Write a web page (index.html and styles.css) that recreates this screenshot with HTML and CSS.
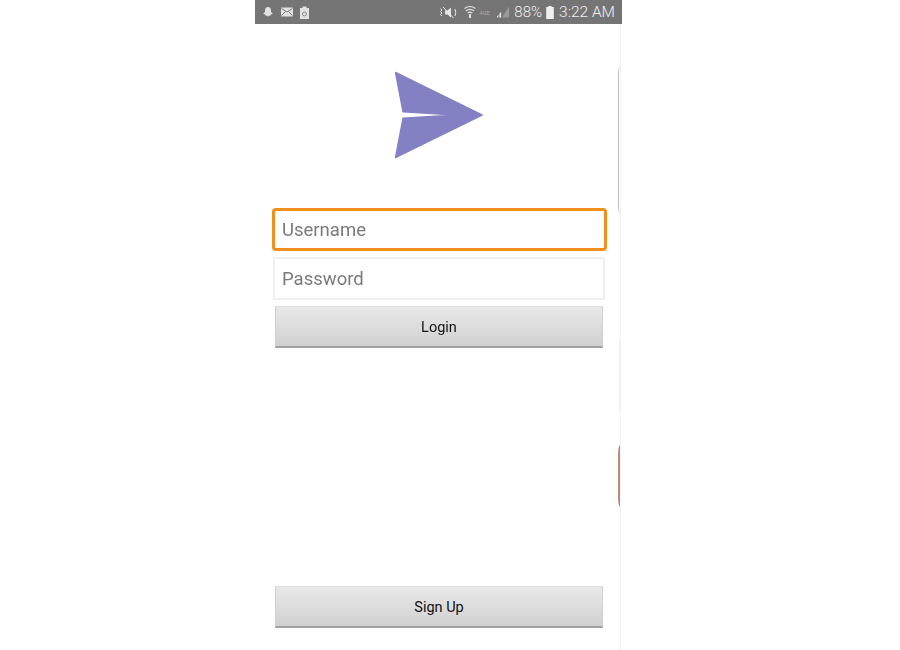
FILE: index.html
```html
<!DOCTYPE html>
<html>
<head>
    <title>Login</title>
    <meta http-equiv="Content-Type" content="text/html;charset=utf-8">
    <link rel="stylesheet" href="styles.css">
</head>
<body>
<div class="phone">
    <div class="status">
        <div class="status-left">
            <svg class="ico" width="12" height="12" viewBox="0 0 12 12"><path fill="#e2e2e2" d="M6 1C4 1 3 2.500 3 4.200V6L1 7.800 3 8.400 3.600 9.600 5 9.800 6 10.800 7 9.800 8.400 9.600 9 8.400 11 7.800 9 6V4.200C9 2.500 8 1 6 1Z"/></svg>
            <svg class="ico" width="12" height="10" viewBox="0 0 12 10"><rect width="12" height="9" y="0.500" fill="#e2e2e2"/><path fill="none" stroke="#777" stroke-width="1" d="M0.500 1.500 6 5 11.500 1.500M0.500 8.500 4.500 4.500M11.500 8.500 7.500 4.500"/></svg>
            <svg class="ico" width="9" height="13" viewBox="0 0 9 13"><path fill="#e2e2e2" d="M0 2H2.500V0.500H6.500V2H9V13H0Z"/><circle cx="4.500" cy="8" r="2" fill="none" stroke="#8a8a8a" stroke-width="1"/></svg>
        </div>
        <div class="status-right">
            <svg class="ico" width="18" height="13" viewBox="0 0 18 13"><path fill="#e6e6e6" d="M6 4.500H8.500L12 1.500V11.500L8.500 8.500H6Z"/><path fill="none" stroke="#e6e6e6" stroke-width="1" d="M1.500 2.500 3 4 1.500 5.500 3 7 1.500 8.500 3 10M16 3Q17.500 6.500 16 10M4 1 14.500 12"/></svg>
            <svg class="ico wifi" width="12" height="14" viewBox="0 0 12 14"><path fill="none" stroke="#e2e2e2" stroke-width="1.200" d="M0.500 3.500Q6 -0.500 11.500 3.500M2 5.800Q6 3 10 5.800M3.700 8Q6 6.400 8.300 8"/><path fill="#e2e2e2" d="M5 9H7V13H5Z"/></svg>
            <span class="net">4GE</span>
            <svg class="ico signal" width="12" height="12" viewBox="0 0 13 12"><path fill="#9a9a9a" d="M13 0V12H5.500Z"/><path fill="#e6e6e6" d="M0 12V10.500L1.500 9V12ZM2.500 12V8L4.500 6V12Z"/></svg>
            <span class="pct">88%</span>
            <svg class="ico batt" width="8" height="13" viewBox="0 0 7 12"><path fill="#f0f0f0" d="M2 0H5V1H7V12H0V1H2Z"/></svg>
            <span class="time">3:22 AM</span>
        </div>
    </div>
    <div class="screen">
        <div class="edge edge-top"></div>
        <div class="edge edge-mid"></div>
        <div class="edge edge-low"></div>
        <div class="logo">
            <svg width="90" height="88" viewBox="0 0 90 88">
                <path fill="#8480c4" stroke="#8480c4" stroke-width="1.400" stroke-linejoin="round" d="M1.500 1.500 88 44 1.500 86.500 9 47.300 62 44 9 40.700Z"/>
            </svg>
        </div>
        <div class="form">
            <div class="field focus">Username</div>
            <div class="field">Password</div>
            <div class="btn">Login</div>
        </div>
        <div class="bottom">
            <div class="btn">Sign Up</div>
        </div>
    </div>
</div>
</body>
</html>
```

FILE: styles.css
```css
html,body{height:100%;}
body{margin:0;padding:0;background:#ffffff;font-family:'Roboto','Liberation Sans',sans-serif;overflow:hidden;}
.phone{width:367px;height:650px;margin-left:255px;filter:blur(0.35px);}
.status{height:24px;background:#757575;color:#f0f0f0;display:flex;justify-content:space-between;align-items:center;padding:0 7px 0 7px;box-sizing:border-box;}
.status-left{display:flex;align-items:center;gap:7px;}
.status-right{display:flex;align-items:center;}
.ico{display:block;}
.wifi{margin-left:7px;}
.net{font-size:6px;color:#a8a8a8;margin-left:3px;width:18px;}
.signal{margin-left:0;}
.pct{font-size:15px;font-weight:300;margin-left:5px;}
.batt{margin-left:4px;}
.time{font-size:15.500px;font-weight:300;margin-left:5px;}
.screen{position:relative;width:365px;height:626px;border-right:1px solid #f3f3f3;box-sizing:content-box;}
.logo{height:184px;box-sizing:border-box;padding:47px 0 0 139px;}
.logo svg{display:block;}
.form{padding-left:17px;}
.field{box-sizing:border-box;width:332px;height:43px;margin:0 0 6px 1px;padding-left:7px;border:2px solid #f0f0f0;font-size:18.500px;line-height:41px;color:#7a7a7a;}
.field.focus{width:335px;margin:0 0 6px 0;padding-left:7px;border:3px solid #f28e1c;border-radius:4px;line-height:39px;}
.btn{box-sizing:border-box;width:328px;height:42px;margin-left:3px;background:linear-gradient(#e9e9e9,#d0d0d0);border:1px solid #cfcfcf;border-top-color:#dedede;border-bottom:2px solid #a0a0a0;font-size:14.500px;line-height:42px;text-align:center;color:#111111;}
.bottom{position:absolute;left:17px;top:562px;}
.edge{position:absolute;width:1px;right:0;border-left:1px solid #bdbdbd;border-radius:2px 0 0 2px / 10px 0 0 10px;}
.edge-top{top:42px;height:148px;}
.edge-mid{top:315px;height:72px;width:0;border-left-color:#f0f0f0;border-radius:0;}
.edge-low{top:421px;height:62px;width:0;border-left:2px solid #b58a78;}
```
